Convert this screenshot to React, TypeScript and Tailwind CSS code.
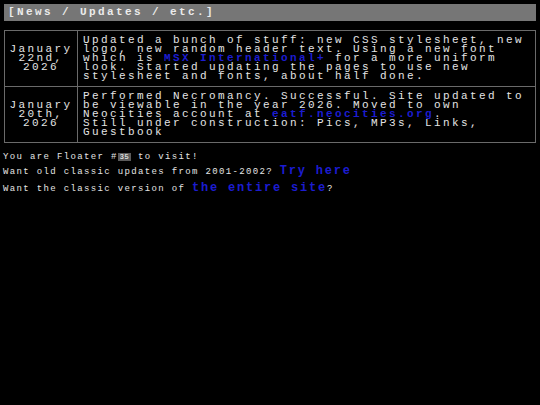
export default function App() {
  const mono = "font-['Liberation_Mono','DejaVu_Sans_Mono',monospace]";

  return (
    <div className={`min-h-[405px] w-[540px] bg-black text-[#e4e4e4] ${mono}`}>
      <div className="px-1 pt-1">
        {/* header bar */}
        <div className="h-[17px] bg-[#767676] pl-1 text-[11px] font-bold leading-[17px] tracking-[2.4px] text-[#ececec]">
          [News / Updates / etc.]
        </div>

        {/* news table */}
        <table className="mt-[9px] w-full border-collapse border border-[#6a6a6a] text-[11px] leading-[9px] tracking-[2.4px]">
          <tbody>
            <tr>
              <td className="w-[73px] border border-[#6a6a6a] text-center align-middle">
                January<br />22nd,<br />2026
              </td>
              <td className="border border-[#6a6a6a] pl-[5px] pr-1 py-[5px] align-top">
                Updated a bunch of stuff: new CSS stylesheet, new logo, new random header text. Using a new font which is{" "}
                <a className="font-bold text-[#1c1cd0]">MSX International+</a> for a more uniform look. Started updating the pages to use new stylesheet and fonts, about half done.
              </td>
            </tr>
            <tr>
              <td className="w-[73px] border border-[#6a6a6a] text-center align-middle">
                January<br />20th,<br />2026
              </td>
              <td className="border border-[#6a6a6a] pl-[5px] pr-1 py-[5px] align-top">
                Performed Necromancy. Successful. Site updated to be viewable in the year 2026. Moved to own Neocities account at{" "}
                <a className="font-bold text-[#1c1cd0]">eatf.neocities.org</a>.
                <br />
                Still under construction: Pics, MP3s, Links, Guestbook
              </td>
            </tr>
          </tbody>
        </table>
      </div>

      {/* footer lines */}
      <div className="mt-[7px] pl-[3px] text-[9px] tracking-[1.35px]">
        <p className="h-[14px] leading-[14px]">
          You are Floater #
          <span className="bg-[#5a5a5a] px-[2px] text-[7px] tracking-[0.5px] text-white">35</span>
          {" "}to visit!
        </p>
        <p className="h-[15px] leading-[15px]">
          Want old classic updates from 2001-2002?{" "}
          <a className="text-[12px] font-bold tracking-[1.8px] text-[#1c1cd0]">Try here</a>
        </p>
        <p className="mt-[2px] h-[15px] leading-[15px]">
          Want the classic version of{" "}
          <a className="text-[12px] font-bold tracking-[1.8px] text-[#1c1cd0]">the entire site</a>?
        </p>
      </div>
    </div>
  );
}
